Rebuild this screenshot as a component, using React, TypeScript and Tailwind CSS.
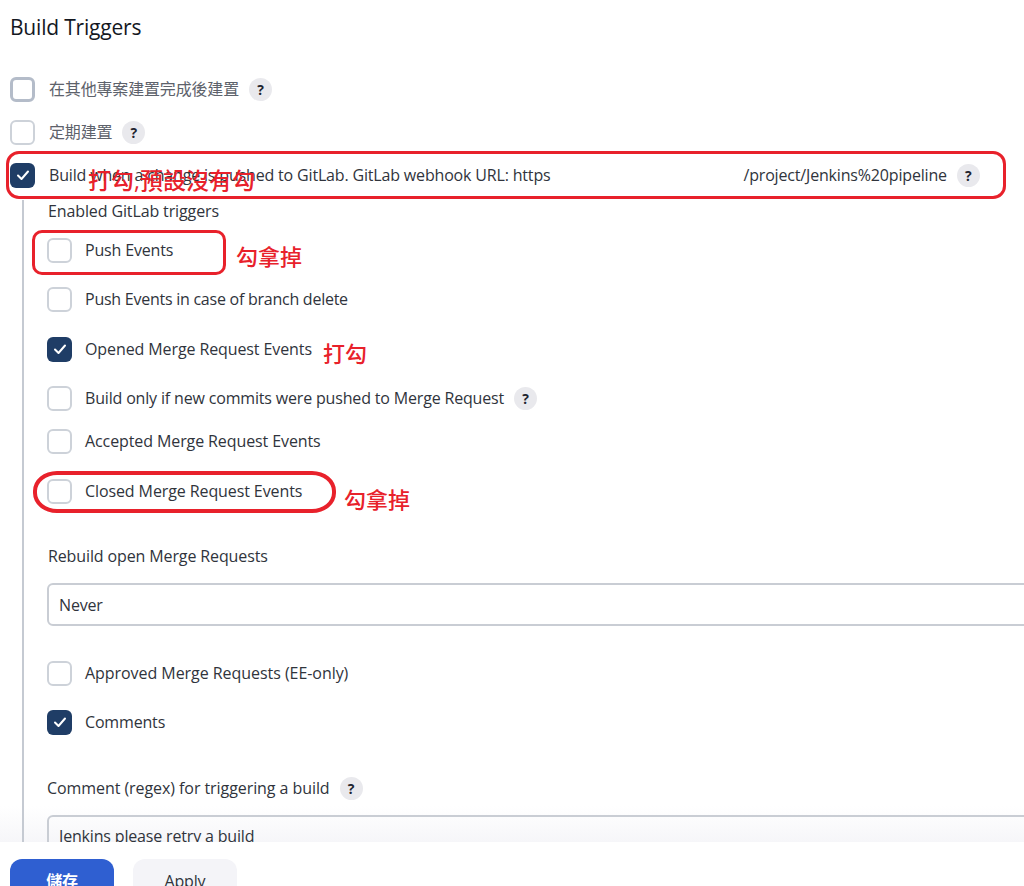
import React from "react"

const fontStack = "font-['Open_Sans','Noto_Sans_CJK_TC',sans-serif]"

function Help() {
  return (
    <span className="flex h-[23px] w-[23px] shrink-0 items-center justify-center rounded-full bg-[#e9e9ed] text-[14px] font-bold tracking-normal text-[#1f2530]">
      ?
    </span>
  )
}

function Box({ checked, strong }: { checked?: boolean; strong?: boolean }) {
  if (checked) {
    return (
      <span className="flex h-[25px] w-[25px] shrink-0 items-center justify-center rounded-[6px] bg-[#1f3d66]">
        <svg width="14" height="14" viewBox="0 0 14 14" fill="none">
          <path d="M2 7.5 5.5 11 12 3.5" stroke="#fff" strokeWidth="2" strokeLinecap="round" strokeLinejoin="round" />
        </svg>
      </span>
    )
  }
  return (
    <span
      className={
        strong
          ? "h-[25px] w-[25px] shrink-0 rounded-[6px] border-[3px] border-[#b4bcc9] bg-white"
          : "h-[25px] w-[25px] shrink-0 rounded-[6px] border-2 border-[#cdd2d9] bg-white"
      }
    />
  )
}

function Row({ label, checked, strong, help, className, gap }: { label: string; checked?: boolean; strong?: boolean; help?: boolean; className?: string; gap?: string }) {
  return (
    <div className={"flex h-6 items-center " + (className ?? "")}>
      <Box checked={checked} strong={strong} />
      <span className={(gap ?? "ml-[13px]") + " whitespace-nowrap"}>{label}</span>
      {help && <span className="ml-[10px]"><Help /></span>}
    </div>
  )
}

export default function App() {
  return (
    <div className={"relative flex h-[886px] w-[1024px] flex-col overflow-hidden bg-white text-[16px] tracking-[-0.17px] text-[#30343c] " + fontStack}>
      <div className="relative flex-1 overflow-hidden pl-[10px]">
        <div className="absolute right-0 bottom-0 left-0 h-[36px] bg-gradient-to-b from-white to-[#f6f6f9]" />

        <div className="relative">
          <h2 className="pt-[13px] text-[21px] leading-[28px] font-medium tracking-[-0.2px] text-[#14181f]">Build Triggers</h2>

          <Row className="mt-[36px] text-[#5d626b]" gap="ml-[14px]" label="在其他專案建置完成後建置" strong help />
          <Row className="mt-[19px] text-[#5d626b]" gap="ml-[14px]" label="定期建置" help />

          <div className="mt-[19px] flex h-6 items-center">
            <Box checked />
            <span className="ml-[14px] whitespace-nowrap">Build when a change is pushed to GitLab. GitLab webhook URL: https</span>
            <span className="w-[193px] shrink-0" />
            <span className="whitespace-nowrap">/project/Jenkins%20pipeline</span>
            <span className="ml-[10px]"><Help /></span>
          </div>

          <div className="mt-[13px] ml-[12px] w-[1100px] border-l-2 border-[#c5cad2] pl-[23px]">
            <div className="h-[22px] pl-px leading-[22px] tracking-[-0.12px]">Enabled GitLab triggers</div>
            <Row className="mt-[16px]" label="Push Events" />
            <Row className="mt-[25px] tracking-[-0.25px]" label="Push Events in case of branch delete" />
            <Row className="mt-[26px] tracking-[-0.1px]" label="Opened Merge Request Events" checked />
            <Row className="mt-[25px]" label="Build only if new commits were pushed to Merge Request" help />
            <Row className="mt-[19px] tracking-[-0.1px]" label="Accepted Merge Request Events" />
            <Row className="mt-[26px] tracking-[-0.1px]" label="Closed Merge Request Events" />

            <div className="mt-[42px] h-[22px] pl-px leading-[22px] tracking-[-0.12px]">Rebuild open Merge Requests</div>
            <div className="mt-[16px] flex h-[43px] items-center rounded-[6px] border-2 border-[#c9cdd4] pl-[10px]">Never</div>

            <Row className="mt-[35px] tracking-[-0.05px]" label="Approved Merge Requests (EE-only)" />
            <Row className="mt-[25px]" label="Comments" checked />

            <div className="mt-[43px] flex h-[22px] items-center tracking-[-0.07px]">
              <span>Comment (regex) for triggering a build</span>
              <span className="ml-[10px]"><Help /></span>
            </div>
            <div className="mt-[16px] h-[60px] rounded-[6px] border-2 border-[#c9cdd4] pt-[7px] pl-[10px]">Jenkins please retry a build</div>
          </div>
        </div>
      </div>

      <div className="flex h-[44px] shrink-0 gap-[19px] overflow-hidden bg-white pt-[17px] pl-[10px]">
        <div className="flex h-[44px] w-[104px] shrink-0 items-center justify-center rounded-[12px] bg-[#2f5fd1] font-semibold text-white">儲存</div>
        <div className="flex h-[44px] w-[104px] shrink-0 items-center justify-center rounded-[12px] bg-[#f4f4f8] text-[#30343c]">Apply</div>
      </div>

      {/* red annotations drawn over the form */}
      <div className="absolute top-[151px] left-[6px] h-[48px] w-[1000px] rounded-[13px] border-[3px] border-[#e8212b]" />
      <div className="absolute top-[230px] left-[32px] h-[45px] w-[194px] rounded-[10px] border-[3px] border-[#e8212b]" />
      <div className="absolute top-[471px] left-[33px] h-[42px] w-[303px] rounded-[24px/20px] border-[4px] border-[#e8212b]" />
      <span className="absolute top-[163px] left-[88px] text-[23px] leading-[34px] font-medium tracking-normal whitespace-nowrap text-[#e8212b]">打勾,預設沒有勾</span>
      <span className="absolute top-[240px] left-[236px] text-[22px] leading-[32px] font-medium tracking-normal whitespace-nowrap text-[#e8212b]">勾拿掉</span>
      <span className="absolute top-[337px] left-[323px] text-[22px] leading-[32px] font-medium tracking-normal whitespace-nowrap text-[#e8212b]">打勾</span>
      <span className="absolute top-[483px] left-[344px] text-[22px] leading-[32px] font-medium tracking-normal whitespace-nowrap text-[#e8212b]">勾拿掉</span>
    </div>
  )
}
